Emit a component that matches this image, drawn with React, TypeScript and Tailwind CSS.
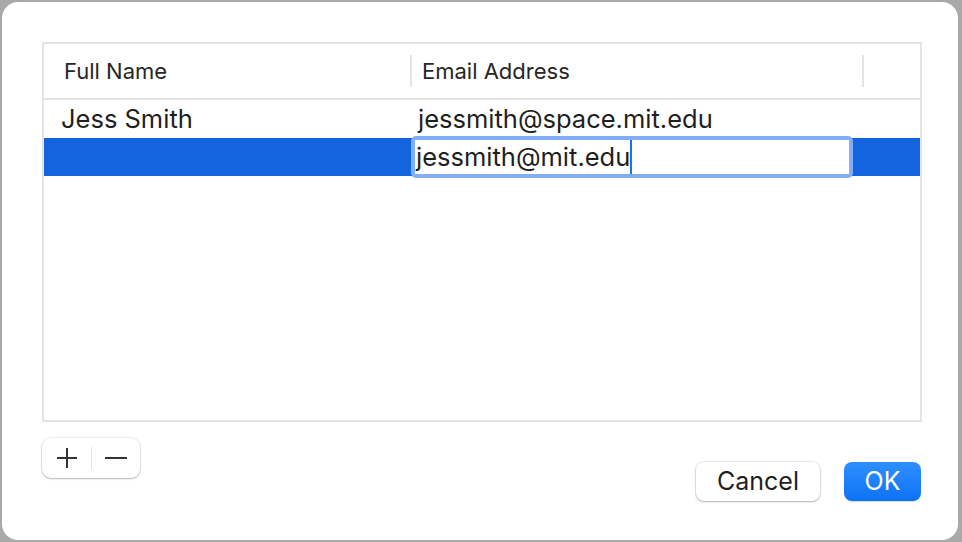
import React from "react";

const font = { fontFamily: "Inter, 'Noto Sans', sans-serif" };

type Row = { name: string; email: string };

const rows: Row[] = [{ name: "Jess Smith", email: "jessmith@space.mit.edu" }];

function PlusMinus() {
  return (
    <div className="flex h-[40px] w-[98px] items-center rounded-[9px] bg-white shadow-[0_0_0_1px_rgba(0,0,0,0.06),0_1px_2px_rgba(0,0,0,0.25)]">
      <div className="flex w-[49px] items-center justify-center">
        <svg width="22" height="22" viewBox="0 0 22 22">
          <path d="M11 1v20M1 11h20" stroke="#333" strokeWidth="2" />
        </svg>
      </div>
      <div className="h-[22px] w-px bg-[#e2e2e2]" />
      <div className="flex flex-1 items-center justify-center">
        <svg width="22" height="22" viewBox="0 0 22 22">
          <path d="M0 11h22" stroke="#333" strokeWidth="2" />
        </svg>
      </div>
    </div>
  );
}

export default function App() {
  return (
    <div className="h-[542px] w-[962px] bg-[#a9a9a9] pt-[2px] pl-[2px] pr-[4px] pb-[2px]" style={font}>
      <div className="flex h-full flex-col rounded-[16px] bg-white pt-[40px] pl-[40px] pr-[37px]">
        {/* table */}
        <div className="flex h-[380px] w-[880px] flex-col border-2 border-[#e4e4e4]">
          <div className="flex h-[56px] shrink-0 items-center border-b-2 border-[#e4e4e4] text-[22px] text-[#262626]">
            <div className="w-[366px] pl-[20px]">Full Name</div>
            <div className="h-[32px] w-[2px] bg-[#e4e4e4]" />
            <div className="w-[450px] pl-[10px]">Email Address</div>
            <div className="h-[32px] w-[2px] bg-[#e4e4e4]" />
          </div>
          {rows.map((r) => (
            <div key={r.email} className="flex h-[38px] items-center text-[25.5px] text-[#1f1f1f]">
              <div className="w-[368px] pl-[17px]">{r.name}</div>
              <div className="pl-[6px]">{r.email}</div>
            </div>
          ))}
          <div className="flex h-[38px] items-center bg-[#1464de]">
            <div className="w-[367px]" />
            <div className="flex h-[42px] w-[442px] items-center rounded-[5px] bg-[#80aefa] p-[4px]">
              <div className="flex h-full w-full items-center bg-white text-[25.5px] text-[#1f1f1f]">
                <span className="pl-[1px] leading-none">jessmith@mit.edu</span>
                <span className="h-full w-[2px] bg-[#1a73f0]" />
              </div>
            </div>
          </div>
        </div>

        {/* footer */}
        <div className="flex items-start justify-between pt-[16px]">
          <PlusMinus />
          <div className="mt-[24px] flex gap-[24px]">
            <button className="h-[39px] w-[124px] rounded-[8px] bg-white text-[25px] text-[#1f1f1f] shadow-[0_0_0_1px_rgba(0,0,0,0.08),0_1px_2px_rgba(0,0,0,0.25)]">
              Cancel
            </button>
            <button className="h-[39px] w-[77px] rounded-[8px] bg-gradient-to-b from-[#2e8fff] to-[#0a72f5] text-[25px] text-white shadow-[0_1px_1px_rgba(0,0,0,0.15)]">
              OK
            </button>
          </div>
        </div>
      </div>
    </div>
  );
}
